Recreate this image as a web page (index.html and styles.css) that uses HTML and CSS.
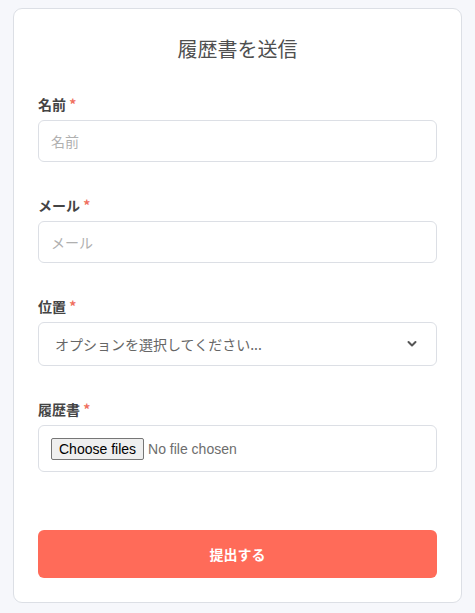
FILE: index.html
```html
<!DOCTYPE html>
<html lang="ja">
<head>
<meta charset="utf-8">
<link rel="stylesheet" href="styles.css">
</head>
<body>
<form class="card">
  <h1 class="title">履歴書を送信</h1>
  <div class="field">
    <label class="label">名前 <span class="req">*</span></label>
    <input class="input" type="text" placeholder="名前">
  </div>
  <div class="field">
    <label class="label">メール <span class="req">*</span></label>
    <input class="input" type="email" placeholder="メール">
  </div>
  <div class="field">
    <label class="label">位置 <span class="req">*</span></label>
    <div class="select">
      <span class="select-text">オプションを選択してください...</span>
      <svg class="chev" width="12" height="8" viewBox="0 0 12 8"><path d="M2.5 2l3.5 3.5 3.5-3.5" fill="none" stroke="#555" stroke-width="2" stroke-linecap="round" stroke-linejoin="round"/></svg>
    </div>
  </div>
  <div class="field">
    <label class="label">履歴書 <span class="req">*</span></label>
    <div class="filebox">
      <button class="file-btn" type="button">Choose files</button>
      <span class="file-status">No file chosen</span>
    </div>
  </div>
  <button class="submit" type="button">提出する</button>
</form>
</body>
</html>
```
FILE: styles.css
```css
* { box-sizing: border-box; }
body {
  margin: 0;
  background: #f6f7fb;
  font-family: "Noto Sans CJK JP", "Noto Sans", sans-serif;
  color: #444;
}
.card {
  margin: 8px 13px 0 13px;
  width: 449px;
  height: 595px;
  background: #fff;
  border: 1px solid #dcdfe5;
  border-radius: 9px;
  padding: 24px 24px 23px 24px;
  display: flex;
  flex-direction: column;
}
.title {
  margin: 0 0 29px 0;
  font-size: 20px;
  line-height: 32px;
  font-weight: 400;
  text-align: center;
  color: #4f4f4f;
}
.field {
  display: flex;
  flex-direction: column;
  margin-bottom: 33px;
}
.label {
  font-size: 14px;
  line-height: 20px;
  font-weight: 700;
  color: #444;
  margin-bottom: 6px;
}
.req { color: #f07060; }
.input {
  height: 42px;
  border: 1px solid #dcdfe5;
  border-radius: 6px;
  padding: 0 12px;
  font-family: inherit;
  font-size: 14px;
  color: #444;
  outline: none;
}
.input::placeholder { color: #b0b0b0; }
.select {
  height: 44px;
  border: 1px solid #dcdfe5;
  border-radius: 6px;
  padding: 0 18px 0 16px;
  display: flex;
  align-items: center;
  justify-content: space-between;
}
.select-text {
  font-size: 14px;
  color: #666;
}
.filebox {
  height: 47px;
  border: 1px solid #dcdfe5;
  border-radius: 6px;
  padding: 0 12px;
  display: flex;
  align-items: center;
  gap: 4px;
  font-family: "Liberation Sans", Arial, sans-serif;
  font-size: 14px;
}
.file-btn {
  height: 22px;
  padding: 0 7px;
  border: 1px solid #767676;
  border-radius: 2px;
  background: #efefef;
  color: #000;
  font-family: inherit;
  font-size: 14px;
}
.file-status { color: #6d6d6d; }
.submit {
  margin-top: 25px;
  height: 48px;
  border: none;
  border-radius: 6px;
  background: #ff6b59;
  color: #fff;
  font-family: inherit;
  font-size: 14px;
  font-weight: 700;
}
```
